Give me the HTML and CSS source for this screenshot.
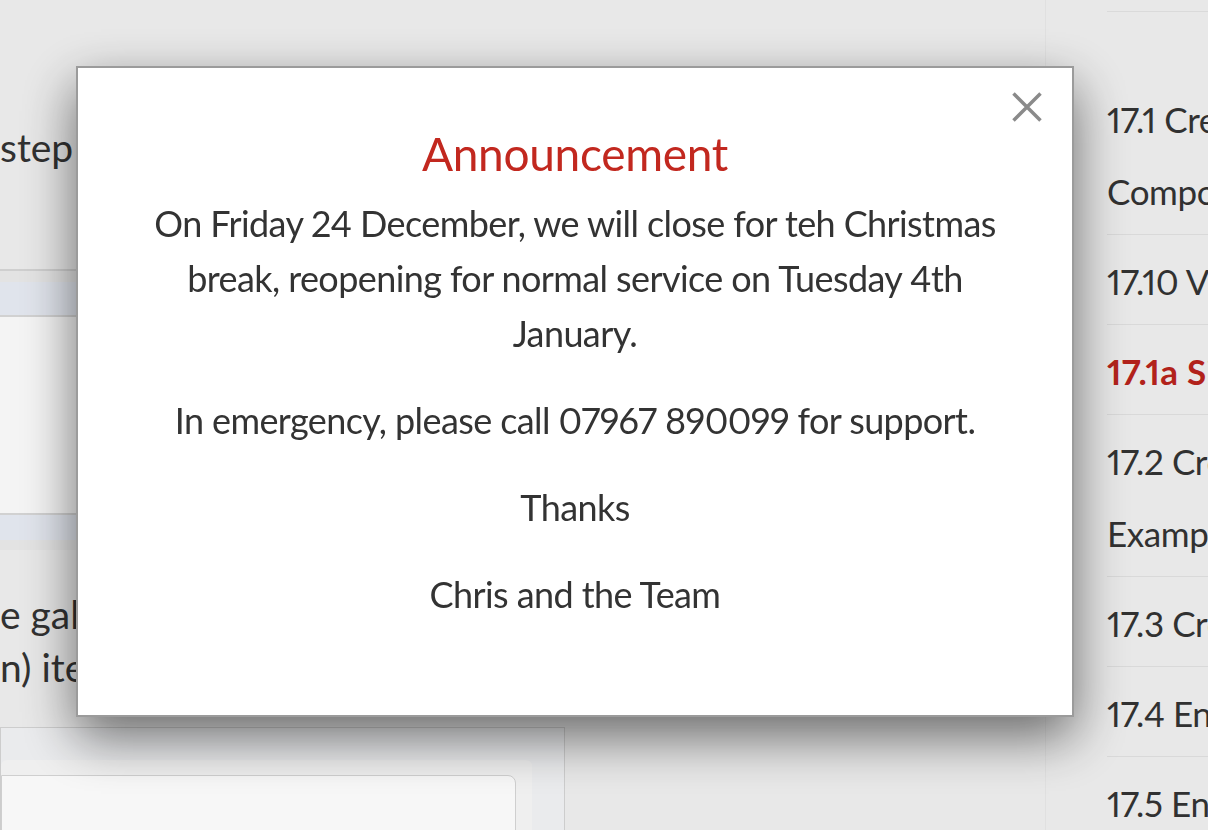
FILE: index.html
```html
<!DOCTYPE html>
<html lang="en">
<head>
    <meta charset="UTF-8" />
    <meta name="viewport" content="width=device-width, initial-scale=1.0"/>
    <title>17.1a Sidebar – Course Notes</title>
    <link rel="stylesheet" href="styles.css">
</head>
<body>

<div class="page">
    <main class="content">
        <p class="lead">step process for building the component.</p>

        <div class="demo-frame">
            <div class="demo-head"></div>
            <div class="demo-body"></div>
            <div class="demo-foot"></div>
        </div>

        <p class="note">e gallery shows how the list of<br>n) items is laid out in a grid.</p>

        <div class="code-box">
            <div class="code-inner">
                <div class="code-field"></div>
            </div>
        </div>
    </main>

    <aside class="sidebar">
        <div class="side-top"></div>
        <ul class="toc">
            <li>17.1 Creating Components</li>
            <li>17.10 Vue Router</li>
            <li class="active">17.1a Sidebar</li>
            <li>17.2 Creating Examples</li>
            <li>17.3 Creating Forms</li>
            <li>17.4 Enhancing UI</li>
            <li>17.5 Enums</li>
        </ul>
    </aside>
</div>

<div class="overlay"></div>

<div class="modal" role="dialog" aria-labelledby="modal-title">
    <button class="modal-close" aria-label="Close">
        <svg width="30" height="30" viewBox="0 0 30 30">
            <path d="M1.5 1.5 L28.5 28.5 M28.5 1.5 L1.5 28.5" stroke="#8a8a8a" stroke-width="3.5" fill="none"/>
        </svg>
    </button>
    <h2 id="modal-title">Announcement</h2>
    <p>On Friday 24 December, we will close for teh Christmas break, reopening for normal service on Tuesday 4th January.</p>
    <p>In emergency, please call 07967 890099 for support.</p>
    <p>Thanks</p>
    <p>Chris and the Team</p>
</div>

</body>
</html>
```

FILE: styles.css
```css
body, html {
    margin: 0;
    padding: 0;
    font-family: 'Lato', sans-serif;
    font-variant-numeric: proportional-nums;
    background: #f0f0f0;
    color: #333;
    height: 100vh;
    overflow: hidden;
}

.page {
    display: grid;
    grid-template-columns: 1045px 420px;
    height: 100vh;
}

/* left column, mostly hidden by the dialog */
.content {
    font-size: 39px;
    line-height: 53px;
}

.lead {
    margin: 121px 0 0;
    white-space: nowrap;
}

.demo-frame {
    margin-top: 95px;
    border-top: 2px solid #d6d6d6;
    background: #ebebeb;
    padding: 11px 0 10px;
}

.demo-head {
    height: 33px;
    background: #e8ecf4;
    border-bottom: 2px solid #d8d8d8;
}

.demo-body {
    height: 196px;
    background: #fcfcfc;
}

.demo-foot {
    height: 25px;
    background: #e8ecf4;
    border-top: 2px solid #d8d8d8;
}

.note {
    margin: 38px 0 0;
    white-space: nowrap;
}

.code-box {
    margin-top: 33px;
    width: 565px;
    height: 140px;
    box-sizing: border-box;
    border: 1px solid #d4d4d4;
    background: #f2f3f5;
    padding: 32px 32px 0 0;
}

.code-inner {
    height: 100%;
    background: #f7f7f7;
    border-radius: 6px 6px 0 0;
    padding: 15px 16px 0 0;
}

.code-field {
    height: 100%;
    background: #fff;
    border: 1px solid #d6d6d6;
    border-radius: 0 8px 0 0;
}

/* table of contents */
.sidebar {
    border-left: 1px solid #e8e8e8;
    background: #f0f0f0;
    padding-left: 61px;
}

.side-top {
    height: 11px;
    border-bottom: 1px solid #e2e2e2;
}

.toc {
    list-style: none;
    margin: 0;
    padding: 61px 0 0;
    width: 340px;
    font-size: 35px;
    line-height: 72px;
    letter-spacing: -0.4px;
}

.toc li {
    padding: 10px 0 7px;
    border-bottom: 1px solid #e0e0e0;
}

.toc li.active {
    color: #b8241c;
    font-weight: 700;
    letter-spacing: 0.3px;
}

/* dialog */
.overlay {
    position: fixed;
    inset: 0;
    background: rgba(0, 0, 0, 0.03);
}

.modal {
    position: fixed;
    left: 76px;
    top: 66px;
    width: 998px;
    box-sizing: border-box;
    background: #fff;
    border: 2px solid #9b9b9b;
    box-shadow: 0 20px 50px rgba(0, 0, 0, 0.55);
    padding: 55px 64px 93px;
    text-align: center;
    color: #333;
    font-size: 36px;
    line-height: 55px;
    letter-spacing: -0.6px;
}

.modal h2 {
    margin: 0 0 11px;
    font-weight: 400;
    font-size: 46px;
    line-height: 62px;
    letter-spacing: -0.3px;
    color: #c2281f;
}

.modal p {
    margin: 0 0 32px;
}

.modal p:last-child {
    margin-bottom: 0;
}

.modal-close {
    position: absolute;
    top: 24px;
    right: 30px;
    width: 30px;
    height: 30px;
    padding: 0;
    border: none;
    background: none;
    cursor: pointer;
}

.modal-close svg {
    display: block;
}
```
